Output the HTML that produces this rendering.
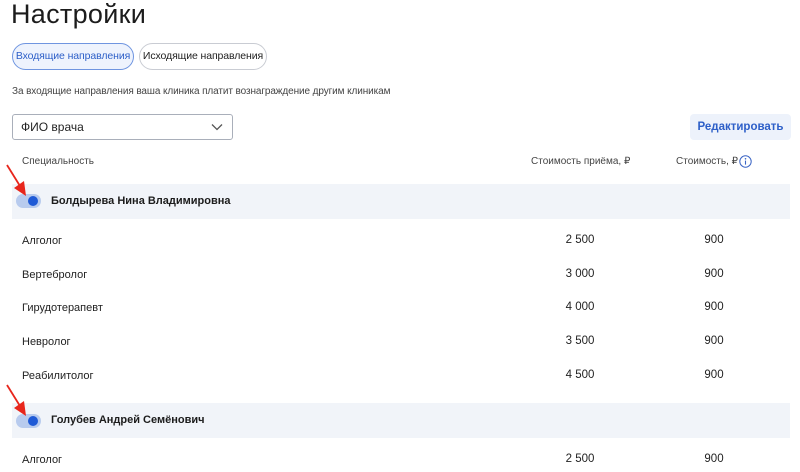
<!DOCTYPE html>
<html><head><meta charset="utf-8"><style>
*{box-sizing:border-box;margin:0;padding:0}
body{width:800px;height:472px;overflow:hidden;background:#fff;font-family:"Liberation Sans","Noto Sans CJK SC",sans-serif;color:#222;position:relative}
.a{position:absolute;white-space:nowrap}
h1{position:absolute;left:11px;top:-1px;font-size:27px;font-weight:400;color:#1c1c1c;letter-spacing:.3px}
.tab{position:absolute;top:43px;height:27px;border-radius:14px;font-size:10.5px;line-height:25px;text-align:center;white-space:nowrap;letter-spacing:-.1px}
.band{position:absolute;left:12px;width:778px;height:35px;background:#f1f4f9}
.tg{position:absolute;left:16px;width:25px;height:14px;border-radius:7px;background:#b8cbee}
.tg:after{content:"";position:absolute;right:3px;top:2px;width:10px;height:10px;border-radius:50%;background:#1f5ad6}
.nm{position:absolute;left:51px;font-size:11px;font-weight:700;color:#1c1c1c;white-space:nowrap}
.r{position:absolute;font-size:11px;color:#222;white-space:nowrap}
.c1{position:absolute;width:80px;left:540px;text-align:center;font-size:11.5px}
.c2{position:absolute;width:80px;left:674px;text-align:center;font-size:11.5px}
</style></head><body>
<h1>Настройки</h1>
<div class="tab" style="left:12px;width:122px;background:#eef3fd;border:1px solid #6f95e0;color:#2d5fc8">Входящие направления</div>
<div class="tab" style="left:139px;width:128px;border:1px solid #c9ccd3;color:#222">Исходящие направления</div>
<div class="a" style="left:12px;top:86px;font-size:10px;color:#444;letter-spacing:-.1px">За входящие направления ваша клиника платит вознаграждение другим клиникам</div>
<div class="a" style="left:12px;top:114px;width:221px;height:26px;border:1px solid #a9afba;border-radius:3px;font-size:12px;line-height:24px;padding-left:8px;color:#222">ФИО врача
<svg style="position:absolute;right:9px;top:8px" width="12" height="8" viewBox="0 0 12 8"><path d="M1 1.5L6 6.5L11 1.5" fill="none" stroke="#555" stroke-width="1.3"/></svg></div>
<div class="a" style="left:690px;top:114px;width:101px;height:26px;background:#edf2fb;border-radius:4px;color:#2d5fc8;font-weight:700;font-size:11.5px;text-align:center;line-height:26px">Редактировать</div>
<div class="a" style="left:22px;top:156px;font-size:10px;color:#444">Специальность</div>
<div class="a" style="left:531px;top:156px;font-size:10px;color:#444">Стоимость приёма, ₽</div>
<div class="a" style="left:676px;top:156px;font-size:10px;color:#444">Стоимость, ₽</div>
<svg class="a" style="left:739px;top:155px" width="13" height="13" viewBox="0 0 13 13"><circle cx="6.5" cy="6.5" r="5.7" fill="none" stroke="#3a64c4" stroke-width="1"/><circle cx="6.5" cy="3.8" r=".8" fill="#3a64c4"/><path d="M6.5 5.6V9.6" stroke="#3a64c4" stroke-width="1.1"/></svg>

<div class="band" style="top:184px"></div>
<div class="tg" style="top:194px"></div>
<div class="nm" style="top:195px">Болдырева Нина Владимировна</div>

<div class="r" style="left:22px;top:235px">Алголог</div><div class="c1" style="top:234px">2 500</div><div class="c2" style="top:234px">900</div>
<div class="r" style="left:22px;top:269px">Вертебролог</div><div class="c1" style="top:268px">3 000</div><div class="c2" style="top:268px">900</div>
<div class="r" style="left:22px;top:302px">Гирудотерапевт</div><div class="c1" style="top:301px">4 000</div><div class="c2" style="top:301px">900</div>
<div class="r" style="left:22px;top:336px">Невролог</div><div class="c1" style="top:335px">3 500</div><div class="c2" style="top:335px">900</div>
<div class="r" style="left:22px;top:370px">Реабилитолог</div><div class="c1" style="top:369px">4 500</div><div class="c2" style="top:369px">900</div>

<div class="band" style="top:403px"></div>
<div class="tg" style="top:414px"></div>
<div class="nm" style="top:414px">Голубев Андрей Семёнович</div>
<div class="r" style="left:22px;top:454px">Алголог</div><div class="c1" style="top:453px">2 500</div><div class="c2" style="top:453px">900</div>

<svg class="a" style="left:0;top:0" width="60" height="472" viewBox="0 0 60 472">
<path d="M7 165L20 186" stroke="#e8261c" stroke-width="1.8"/><path d="M26 196L14 188L24 181Z" fill="#e8261c"/>
<path d="M7 385L20 406" stroke="#e8261c" stroke-width="1.8"/><path d="M26 416L14 408L24 401Z" fill="#e8261c"/>
</svg>
</body></html>
